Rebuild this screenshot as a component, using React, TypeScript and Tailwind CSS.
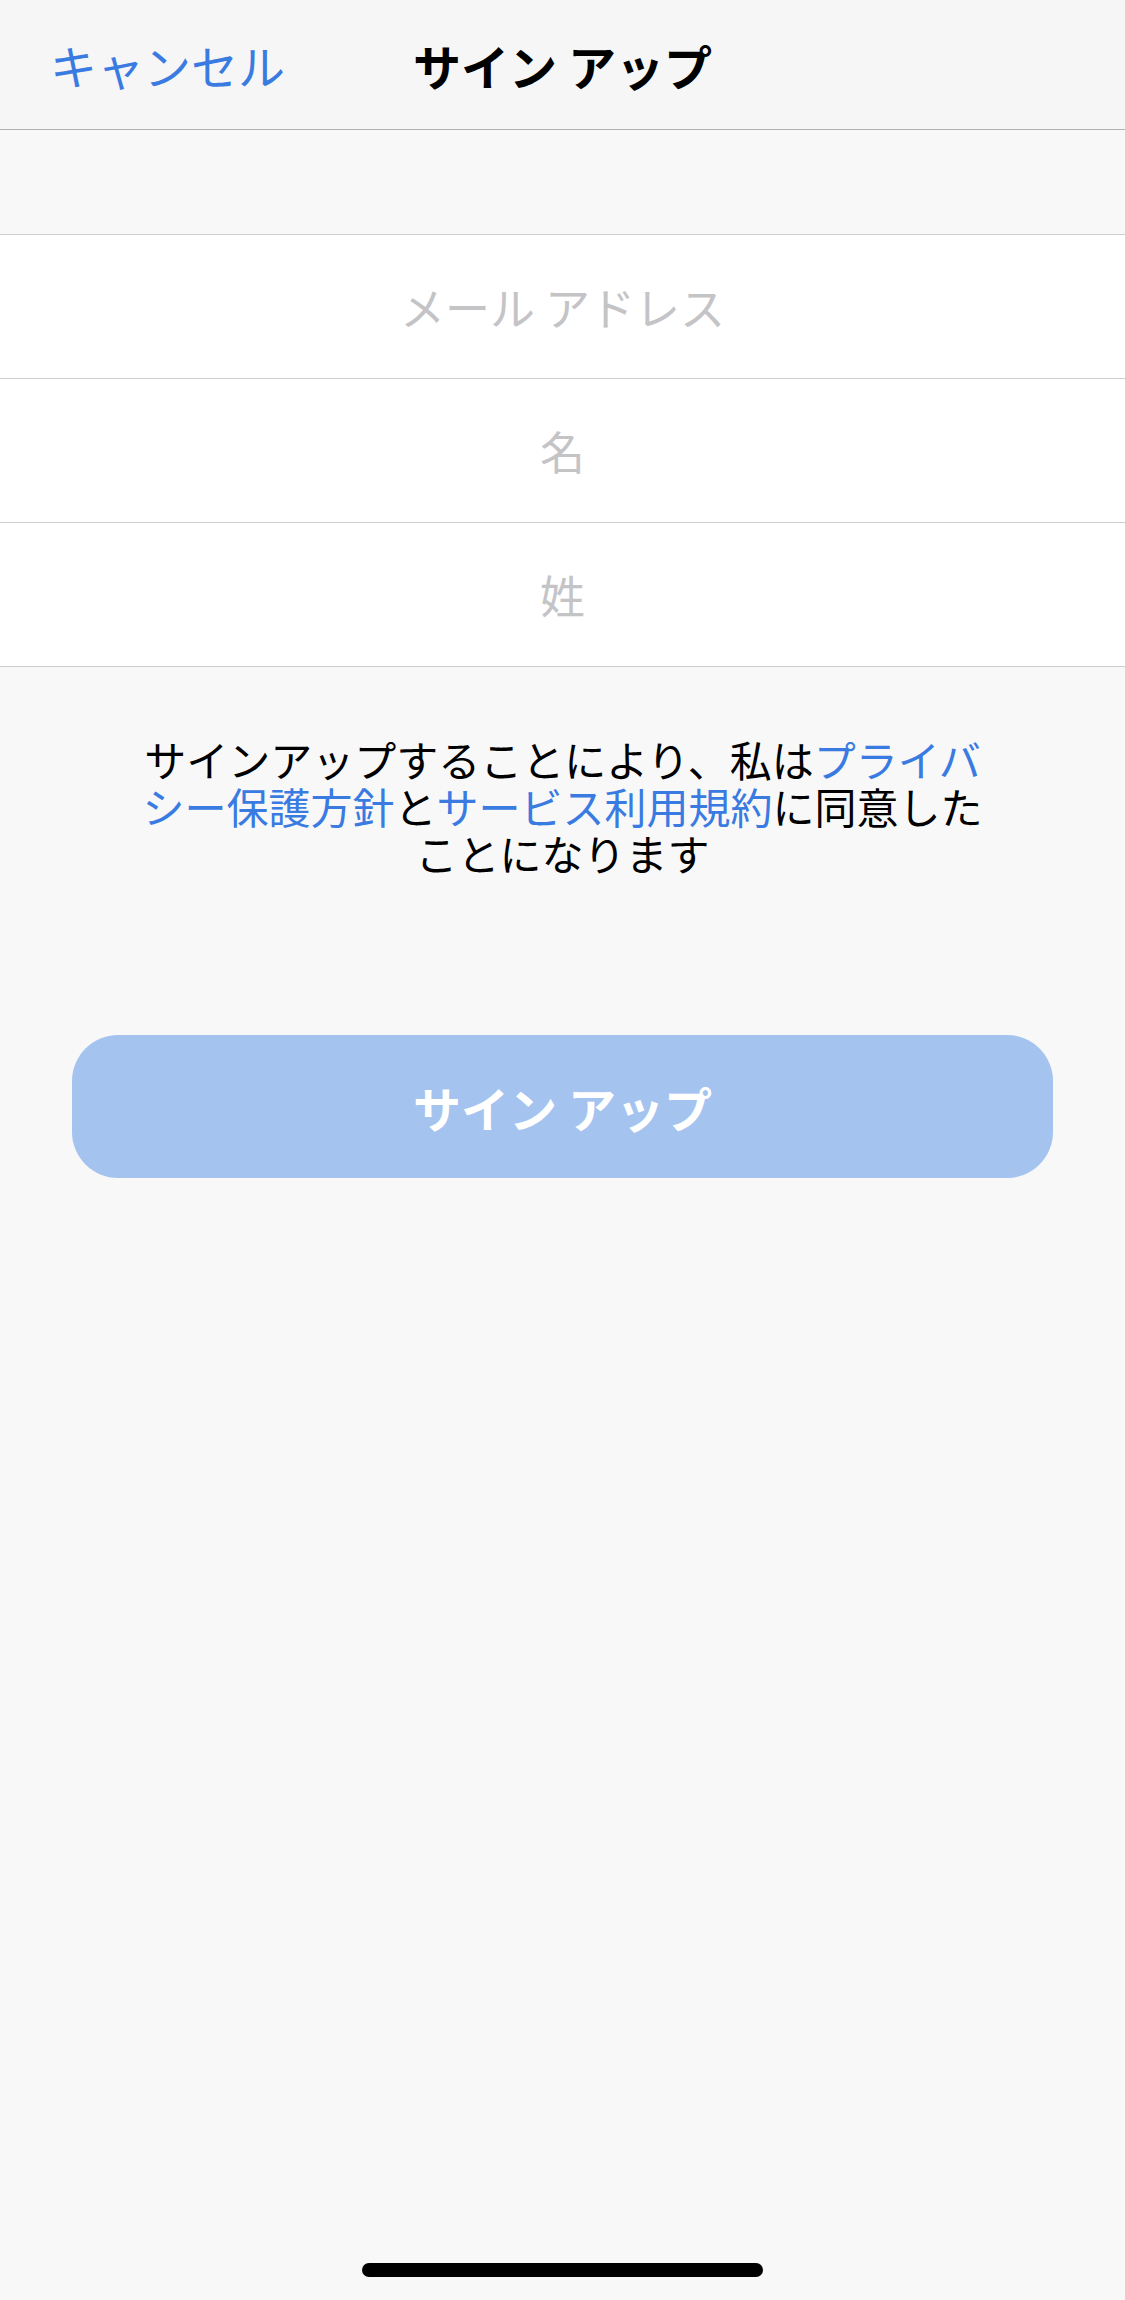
import { useState } from 'react';

const font = "font-['Noto_Sans_CJK_JP','Noto_Sans',sans-serif]";

function Field({ placeholder, type = 'text' }: { placeholder: string; type?: string }) {
  const [value, setValue] = useState<string>('');
  return (
    <div className="h-[144px] bg-white border-b border-[#cfcfd1] flex items-center">
      <input
        type={type}
        value={value}
        onChange={(e) => setValue(e.target.value)}
        placeholder={placeholder}
        className="w-full h-full bg-transparent text-center text-[45px] text-black placeholder:text-[#c4c4c7] outline-none"
      />
    </div>
  );
}

export default function App() {
  return (
    <div className={`${font} min-h-[2300px] w-full bg-[#f8f8f8] flex flex-col`}>
      {/* nav bar */}
      <header className="h-[130px] bg-[#f6f6f6] border-b border-[#b1b1b3] grid grid-cols-[1fr_auto_1fr] items-center">
        <button type="button" className="justify-self-start pl-[50px] text-[47px] text-[#3a7be2] leading-none cursor-pointer">
          キャンセル
        </button>
        <h1 className="text-[48px] font-bold text-black leading-none">サイン アップ</h1>
        <div />
      </header>

      <div className="h-[105px] border-b border-[#cfcfd1]" />

      <Field placeholder="メール アドレス" type="email" />
      <Field placeholder="名" />
      <Field placeholder="姓" />

      <p className="mt-[68px] text-center text-[42px] leading-[47px] text-black whitespace-nowrap">
        サインアップすることにより、私は<span className="text-[#3a7be2]">プライバ</span>
        <br />
        <span className="text-[#3a7be2]">シー保護方針</span>と<span className="text-[#3a7be2]">サービス利用規約</span>に同意した
        <br />
        ことになります
      </p>

      <button
        type="button"
        disabled
        className="mt-[159px] mx-[72px] h-[143px] rounded-[46px] bg-[#a4c3ef] text-white text-[48px] font-bold leading-none"
      >
        サイン アップ
      </button>

      <div className="mt-auto mb-[23px] mx-auto w-[401px] h-[14px] rounded-full bg-black" />
    </div>
  );
}
